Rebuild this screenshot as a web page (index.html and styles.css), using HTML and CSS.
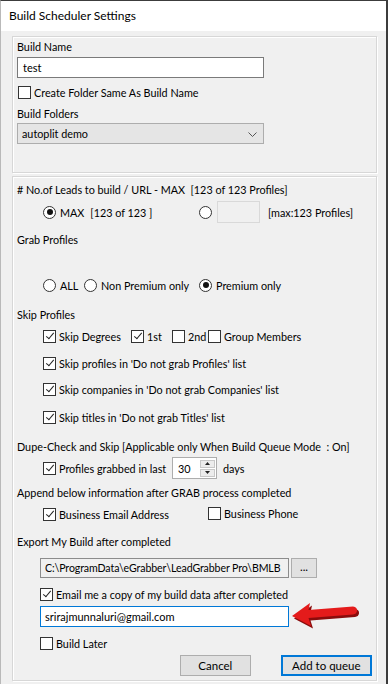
FILE: index.html
```html
<!DOCTYPE html>
<html lang="en">
<head>
  <meta charset="UTF-8">
  <title>Build Scheduler Settings</title>
  <link rel="stylesheet" href="styles.css">
</head>
<body>
  <div class="window">
    <div class="titlebar">Build Scheduler Settings</div>

    <div class="dialog">
      <div class="group group-build">
        <div class="line">Build Name</div>
        <div class="textbox name-box">test</div>
        <div class="line opt name-check"><span class="check"></span>Create Folder Same As Build Name</div>
        <div class="line">Build Folders</div>
        <div class="combo">
          <span>autoplit demo</span>
          <svg class="chevron" width="9" height="5" viewBox="0 0 9 5"><path d="M0.5 0.5 L4.5 4.5 L8.5 0.5" fill="none" stroke="#555" stroke-width="1"/></svg>
        </div>
      </div>

      <div class="group group-opts">
        <div class="line">#&nbsp;No.of Leads to build / URL - MAX&nbsp; [123 of 123 Profiles]</div>
        <div class="leads-row sub">
          <div class="opt"><span class="radio on"></span>MAX <span class="max-count">[123 of 123 ]</span></div>
          <div class="opt"><span class="radio"></span><span class="count-box"></span><span class="max-note">[max:123 Profiles]</span></div>
        </div>
        <div class="line gap-8">Grab Profiles</div>
        <div class="line sub grab-row gap-30">
          <div class="opt"><span class="radio"></span>ALL</div>
          <div class="opt"><span class="radio"></span>Non Premium only</div>
          <div class="opt"><span class="radio on"></span>Premium only</div>
        </div>
        <div class="line gap-13">Skip Profiles</div>
        <div class="line sub degree-row gap-6">
          <div class="opt"><span class="check on"></span>Skip Degrees</div>
          <div class="opt"><span class="check on"></span>1st</div>
          <div class="opt"><span class="check"></span>2nd</div>
          <div class="opt"><span class="check"></span>Group Members</div>
        </div>
        <div class="line sub gap-11"><div class="opt"><span class="check on"></span>Skip profiles in 'Do not grab Profiles' list</div></div>
        <div class="line sub gap-10"><div class="opt"><span class="check on"></span>Skip companies in 'Do not grab Companies' list</div></div>
        <div class="line sub gap-12"><div class="opt"><span class="check on"></span>Skip titles in 'Do not grab Titles' list</div></div>
        <div class="line gap-13">Dupe-Check and Skip [Applicable only When Build Queue Mode&nbsp; : On]</div>
        <div class="spin-row sub">
          <div class="opt"><span class="check on"></span>Profiles grabbed in last</div>
          <div class="spin">
            <span class="spin-value">30</span>
            <span class="spin-btns">
              <span class="spin-btn"><svg width="5" height="3" viewBox="0 0 5 3"><path d="M0 3 L2.5 0 L5 3 Z" fill="#222"/></svg></span>
              <span class="spin-btn"><svg width="5" height="3" viewBox="0 0 5 3"><path d="M0 0 L2.5 3 L5 0 Z" fill="#222"/></svg></span>
            </span>
          </div>
          <span class="days">days</span>
        </div>
        <div class="line gap-5">Append below information after GRAB process completed</div>
        <div class="line sub append-row gap-6">
          <div class="opt"><span class="check on"></span>Business Email Address</div>
          <div class="opt phone"><span class="check"></span>Business Phone</div>
        </div>
        <div class="line gap-11">Export My Build after completed</div>
        <div class="path-row export">
          <div class="textbox path-box">C:\ProgramData\eGrabber\LeadGrabber Pro\BMLB</div>
          <div class="button browse">...</div>
        </div>
        <div class="line export gap-8"><div class="opt"><span class="check on"></span>Email me a copy of my build data after completed</div></div>
        <div class="textbox email-box export">srirajmunnaluri@gmail.com</div>
        <div class="line export gap-8"><div class="opt"><span class="check"></span>Build Later</div></div>
        <div class="actions">
          <div class="button cancel">Cancel</div>
          <div class="button primary">Add to queue</div>
        </div>
      </div>
    </div>

    <svg class="arrow" width="72" height="32" viewBox="0 0 72 32">
      <path d="M3 18 L21 5 L19.5 12 L64 8.5 Q68.5 9 68 13 Q67.5 16 64 16.5 L19.5 20 L22 28 Z" fill="#8a0c0c" transform="translate(1 1.5)"/>
      <path d="M2 17 L20 4 L18.5 11 L63 7.5 Q67.5 8 67 12 Q66.5 15 63 15.5 L18.5 19 L21 27 Z" fill="#e41b1b"/>
    </svg>
  </div>
</body>
</html>
```

FILE: styles.css
```css
html, body {
  margin: 0;
  padding: 0;
}
body {
  font-family: Lato, "Noto Sans", sans-serif;
  font-size: 10.8px;
  color: #000;
  background: #f0f0f0;
}
.window {
  position: relative;
  width: 388px;
  height: 684px;
  box-sizing: border-box;
  border-top: 1px solid #3c3c3c;
  border-right: 2px solid #3c3c3c;
  border-left: 1px solid #b9b9b9;
  background: #f0f0f0;
  overflow: hidden;
}
.titlebar {
  height: 30px;
  line-height: 30px;
  padding-left: 8px;
  background: #fff;
  font-size: 12px;
}
.dialog {
  padding: 5px 9px 0 11px;
}
.group {
  border: 1px solid #d7d7d7;
  box-shadow: inset 1px 1px 0 #fff, 1px 1px 0 #fff;
  padding: 0 4px;
}
.group-build {
  height: 135px;
}
.group-opts {
  margin-top: 3px;
  height: 503px;
}
.line {
  display: flex;
  align-items: center;
  height: 16px;
  margin-top: 4px;
  white-space: nowrap;
}
.group-build .line:first-child {
  margin-top: 1px;
}
.sub {
  padding-left: 26px;
}
.export {
  margin-left: 23px;
}
.gap-5 { margin-top: 5px; }
.gap-6 { margin-top: 6px; }
.gap-8 { margin-top: 8px; }
.gap-10 { margin-top: 10px; }
.gap-11 { margin-top: 11px; }
.gap-12 { margin-top: 12px; }
.gap-13 { margin-top: 13px; }
.gap-30 { margin-top: 30px; }

.opt {
  display: flex;
  align-items: center;
  white-space: nowrap;
}
.check, .radio {
  flex: none;
  width: 11px;
  height: 11px;
  border: 1px solid #333;
  background: #fff;
  margin-right: 3px;
  position: relative;
}
.radio {
  border-radius: 50%;
  margin-right: 4px;
}
.radio.on::after {
  content: "";
  position: absolute;
  left: 2.5px;
  top: 2.5px;
  width: 6px;
  height: 6px;
  border-radius: 50%;
  background: #111;
}
.check.on::after {
  content: "";
  position: absolute;
  left: 3.5px;
  top: 0.5px;
  width: 3px;
  height: 7px;
  border: solid #222;
  border-width: 0 1.2px 1.2px 0;
  transform: rotate(40deg);
}
.name-check {
  margin-top: 6px;
  padding-left: 1px;
}
.name-check + .line {
  margin-top: 5px;
}

.textbox {
  box-sizing: border-box;
  border: 1px solid #7a7a7a;
  background: #fff;
  white-space: nowrap;
  overflow: hidden;
  font-size: 11px;
}
.name-box {
  width: 247px;
  height: 21px;
  line-height: 19px;
  padding-left: 5px;
  margin-top: 3px;
}
.combo {
  box-sizing: border-box;
  width: 247px;
  height: 21px;
  margin-top: 2px;
  border: 1px solid #adadad;
  background: #e5e5e5;
  display: flex;
  align-items: center;
  justify-content: space-between;
  padding: 0 6px 0 4px;
}
.chevron {
  margin-top: 1px;
}

.leads-row {
  display: grid;
  grid-template-columns: 156px auto;
  align-items: center;
  height: 22px;
  margin-top: 4px;
}
.max-count {
  margin-left: 6px;
}
.count-box {
  width: 43px;
  height: 22px;
  box-sizing: border-box;
  border: 1px solid #d9d9d9;
  background: #f0f0f0;
  margin-left: 1px;
}
.max-note {
  margin-left: 8px;
}
.grab-row {
  display: grid;
  grid-template-columns: 41px 115px auto;
}
.degree-row {
  display: grid;
  grid-template-columns: 88px 41px 36px auto;
}
.append-row {
  display: grid;
  grid-template-columns: 165px auto;
}
.phone {
  margin-top: -2px;
}

.spin-row {
  display: grid;
  grid-template-columns: 129px 45px auto;
  align-items: center;
  height: 22px;
  margin-top: 3px;
}
.spin {
  box-sizing: border-box;
  display: flex;
  align-items: center;
  justify-content: space-between;
  height: 22px;
  border: 1px solid #adadad;
  background: #fff;
  padding: 0 1px 0 5px;
}
.spin-btns {
  display: flex;
  flex-direction: column;
  gap: 1px;
}
.spin-btn {
  display: flex;
  align-items: center;
  justify-content: center;
  width: 15px;
  height: 8px;
  border: 1px solid #c8c8c8;
  background: #ececec;
  box-sizing: border-box;
}
.days {
  margin-left: 6px;
}

.path-row {
  display: flex;
  align-items: center;
  margin-top: 9px;
  height: 20px;
}
.path-box {
  width: 249px;
  height: 20px;
  line-height: 18px;
  padding-left: 4px;
  font-size: 10.6px;
  letter-spacing: -0.1px;
  background: #f0f0f0;
  border-color: #8c8c8c;
}
.button {
  box-sizing: border-box;
  display: flex;
  align-items: center;
  justify-content: center;
  border: 1px solid #adadad;
  background: #e1e1e1;
  white-space: nowrap;
  font-size: 11.5px;
}
.browse {
  width: 26px;
  height: 20px;
  margin-left: 2px;
  padding-bottom: 3px;
}
.email-box {
  width: 249px;
  height: 21px;
  line-height: 19px;
  margin-top: 4px;
  padding-left: 4px;
  border-color: #0078d7;
}
.actions {
  display: flex;
  margin-top: 4px;
  padding-left: 163px;
}
.actions .button {
  height: 21px;
}
.cancel {
  width: 72px;
}
.primary {
  width: 93px;
  margin-left: 30px;
  border: 2px solid #0078d7;
}

.arrow {
  position: absolute;
  left: 289px;
  top: 598px;
}
```
